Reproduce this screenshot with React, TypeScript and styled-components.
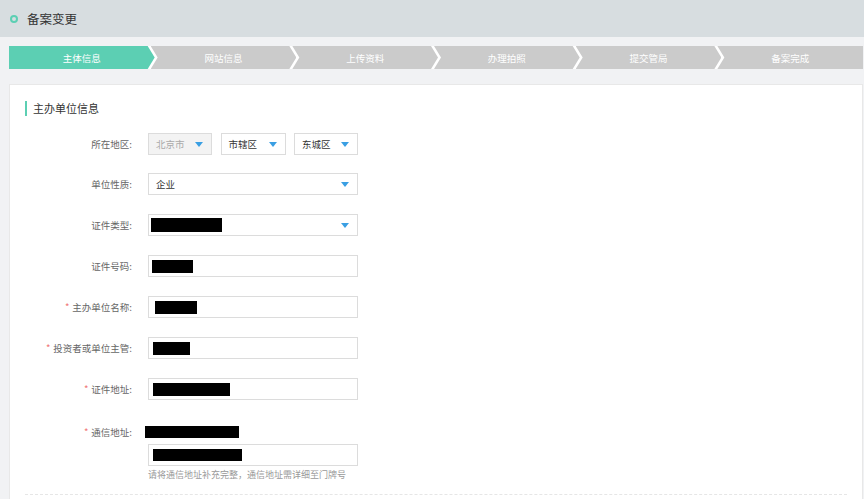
import React from 'react'
import styled, { createGlobalStyle } from 'styled-components'

const GlobalStyle = createGlobalStyle`
  html, body {
    margin: 0;
    padding: 0;
    overflow: hidden;
  }
  body {
    background: #f1f2f4;
    font-family: 'Noto Sans CJK SC', 'Microsoft YaHei', sans-serif;
    color: #333;
  }
`

const TEAL = '#5ccfb3'

const Header = styled.div`
  height: 37px;
  background: #d7dde0;
  display: flex;
  align-items: center;
  gap: 9px;
  padding-left: 10px;
`
const Ring = styled.span`
  width: 4px;
  height: 4px;
  border: 2px solid ${TEAL};
  border-radius: 50%;
`
const HeaderTitle = styled.div`
  font-size: 12.5px;
  color: #333;
`
const Main = styled.div`
  padding: 9px 1px 0 9px;
`
const StepBar = styled.div`
  display: flex;
  height: 23px;
  background: #fff;
`
const Step = styled.div<{ active?: boolean; pos: 'first' | 'mid' | 'last' }>`
  flex: 1;
  margin-left: ${({ pos }) => (pos === 'first' ? '0' : '-4px')};
  background: ${({ active }) => (active ? TEAL : '#cbcbcb')};
  color: #fff;
  font-size: 9.5px;
  display: flex;
  align-items: center;
  justify-content: center;
  clip-path: ${({ pos }) =>
    pos === 'first'
      ? 'polygon(0 0, calc(100% - 7px) 0, 100% 50%, calc(100% - 7px) 100%, 0 100%)'
      : pos === 'last'
      ? 'polygon(0 0, 100% 0, 100% 100%, 0 100%, 7px 50%)'
      : 'polygon(0 0, calc(100% - 7px) 0, 100% 50%, calc(100% - 7px) 100%, 0 100%, 7px 50%)'};
`
const Card = styled.div`
  margin-top: 15px;
  background: #fff;
  border: 1px solid #e8e8e8;
  border-bottom: none;
  padding: 16px 15px 0 15px;
  height: 398px;
  overflow: hidden;
`
const SectionTitle = styled.div`
  display: flex;
  align-items: center;
  gap: 6px;
  font-size: 11px;
  line-height: 15px;
  color: #333;
  &::before {
    content: '';
    width: 2px;
    height: 15px;
    background: ${TEAL};
  }
`
const Form = styled.div`
  margin-top: 17px;
`
const Row = styled.div<{ top?: boolean; gap?: number }>`
  display: grid;
  grid-template-columns: 111px 210px;
  column-gap: 12px;
  align-items: ${({ top }) => (top ? 'start' : 'center')};
  margin-bottom: ${({ gap }) => (gap === undefined ? 19 : gap)}px;
`
const Label = styled.div<{ tall?: boolean }>`
  text-align: right;
  padding-right: 4px;
  font-size: 9.5px;
  color: #666;
  line-height: ${({ tall }) => (tall ? '26px' : '22px')};
`
const Star = styled.span`
  color: #f07272;
  margin-right: 3px;
`
const SelectGroup = styled.div`
  display: grid;
  grid-template-columns: 64px 65px 64px;
  column-gap: 8.5px;
`
const Select = styled.div<{ disabled?: boolean; pl?: number }>`
  box-sizing: border-box;
  height: 22px;
  border: 1px solid #dcdcdc;
  background: ${({ disabled }) => (disabled ? '#f3f3f3' : '#fff')};
  color: ${({ disabled }) => (disabled ? '#aaa' : '#333')};
  display: flex;
  align-items: center;
  justify-content: space-between;
  padding: 0 8px 0 ${({ pl }) => (pl === undefined ? 7 : pl)}px;
  font-size: 9.5px;
`
const Caret = styled.span`
  width: 0;
  height: 0;
  border-left: 4px solid transparent;
  border-right: 4px solid transparent;
  border-top: 5px solid #3a9fe3;
`
const Input = styled.div`
  box-sizing: border-box;
  height: 22px;
  border: 1px solid #dcdcdc;
  background: #fff;
  display: flex;
  align-items: center;
`
const Redact = styled.span<{ w: number; h?: number; ml: number }>`
  display: block;
  width: ${({ w }) => w}px;
  height: ${({ h }) => h || 13}px;
  margin-left: ${({ ml }) => ml}px;
  background: #000;
`
const FirstLine = styled.div`
  height: 25px;
  display: flex;
  align-items: center;
`
const Hint = styled.div`
  margin-top: 2px;
  font-size: 9px;
  line-height: 14px;
  color: #999;
`
const Divider = styled.div`
  margin-top: 12px;
  border-top: 1px dashed #e6e6e6;
`

const steps = ['主体信息', '网站信息', '上传资料', '办理拍照', '提交管局', '备案完成']

const App: React.FC = () => {
  return (
    <>
      <GlobalStyle />
      <Header>
        <Ring />
        <HeaderTitle>备案变更</HeaderTitle>
      </Header>
      <Main>
        <StepBar>
          {steps.map((s, i) => (
            <Step key={s} active={i === 0} pos={i === 0 ? 'first' : i === steps.length - 1 ? 'last' : 'mid'}>
              {s}
            </Step>
          ))}
        </StepBar>
        <Card>
          <SectionTitle>主办单位信息</SectionTitle>
          <Form>
            <Row gap={18}>
              <Label>所在地区:</Label>
              <SelectGroup>
                <Select disabled>
                  北京市
                  <Caret />
                </Select>
                <Select>
                  市辖区
                  <Caret />
                </Select>
                <Select>
                  东城区
                  <Caret />
                </Select>
              </SelectGroup>
            </Row>
            <Row>
              <Label>单位性质:</Label>
              <Select>
                企业
                <Caret />
              </Select>
            </Row>
            <Row>
              <Label>证件类型:</Label>
              <Select pl={2}>
                <Redact w={71} h={14} ml={0} />
                <Caret />
              </Select>
            </Row>
            <Row>
              <Label>证件号码:</Label>
              <Input>
                <Redact w={41} ml={3} />
              </Input>
            </Row>
            <Row>
              <Label>
                <Star>*</Star>主办单位名称:
              </Label>
              <Input>
                <Redact w={42} ml={6} />
              </Input>
            </Row>
            <Row>
              <Label>
                <Star>*</Star>投资者或单位主管:
              </Label>
              <Input>
                <Redact w={37} ml={4} />
              </Input>
            </Row>
            <Row>
              <Label>
                <Star>*</Star>证件地址:
              </Label>
              <Input>
                <Redact w={77} ml={4} />
              </Input>
            </Row>
            <Row top gap={0}>
              <Label tall>
                <Star>*</Star>通信地址:
              </Label>
              <div>
                <FirstLine>
                  <Redact w={94} h={12} ml={-3} />
                </FirstLine>
                <Input>
                  <Redact w={89} h={12} ml={4} />
                </Input>
                <Hint>请将通信地址补充完整，通信地址需详细至门牌号</Hint>
              </div>
            </Row>
          </Form>
          <Divider />
        </Card>
      </Main>
    </>
  )
}

export default App
